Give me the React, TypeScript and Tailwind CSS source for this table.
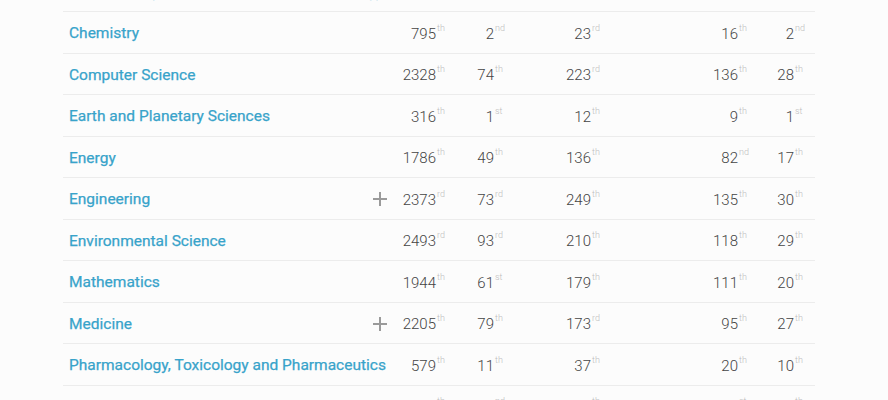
import React from "react";

type Rank = [string, string];
type Row = { name: string; plus?: boolean; r: Rank[] };

const rows: Row[] = [
  { name: "Biochemistry, Genetics and Molecular Biology", r: [["1120", "th"], ["38", "th"], ["142", "nd"], ["64", "th"], ["12", "th"]] },
  { name: "Chemistry", r: [["795", "th"], ["2", "nd"], ["23", "rd"], ["16", "th"], ["2", "nd"]] },
  { name: "Computer Science", r: [["2328", "th"], ["74", "th"], ["223", "rd"], ["136", "th"], ["28", "th"]] },
  { name: "Earth and Planetary Sciences", r: [["316", "th"], ["1", "st"], ["12", "th"], ["9", "th"], ["1", "st"]] },
  { name: "Energy", r: [["1786", "th"], ["49", "th"], ["136", "th"], ["82", "nd"], ["17", "th"]] },
  { name: "Engineering", plus: true, r: [["2373", "rd"], ["73", "rd"], ["249", "th"], ["135", "th"], ["30", "th"]] },
  { name: "Environmental Science", r: [["2493", "rd"], ["93", "rd"], ["210", "th"], ["118", "th"], ["29", "th"]] },
  { name: "Mathematics", r: [["1944", "th"], ["61", "st"], ["179", "th"], ["111", "th"], ["20", "th"]] },
  { name: "Medicine", plus: true, r: [["2205", "th"], ["79", "th"], ["173", "rd"], ["95", "th"], ["27", "th"]] },
  { name: "Pharmacology, Toxicology and Pharmaceutics", r: [["579", "th"], ["11", "th"], ["37", "th"], ["20", "th"], ["10", "th"]] },
  { name: "Physics and Astronomy", r: [["1254", "th"], ["42", "nd"], ["156", "th"], ["91", "st"], ["19", "th"]] },
];

const numWidths = ["w-[40px]", "w-[44px]", "w-[83px]", "w-[133px]", "w-[42px]"];

function Plus() {
  return (
    <svg width="16" height="16" viewBox="0 0 16 16" className="shrink-0 mt-[2px]">
      <path d="M8 1v14M1 8h14" stroke="#9a9a9a" strokeWidth="2" />
    </svg>
  );
}

export default function App() {
  return (
    <div className="w-[888px] h-[400px] overflow-hidden bg-[#fcfcfc]">
      <div className="ml-[63px] w-[752px] -mt-[29.5px]">
        {rows.map((row, i) => (
          <div
            key={i}
            className="flex items-center h-[41.5px] border-b border-[#ececec]"
          >
            <div className="w-[333px] shrink-0 flex items-center justify-between pl-[6px] pr-[8px]">
              <span
                className="text-[15.5px] text-[#38a3ca] whitespace-nowrap leading-none mt-[3px] [-webkit-text-stroke:0.25px_#38a3ca]"
                style={{ fontFamily: 'Roboto, sans-serif' }}
              >
                {row.name}
              </span>
              {row.plus && <Plus />}
            </div>
            {row.r.map(([n, s], j) => (
              <div key={j} className="flex shrink-0 mt-[4px]" style={{ fontFamily: 'Roboto, sans-serif' }}>
                <span className={`${numWidths[j]} text-right text-[15px] font-light text-[#444] leading-none`}>{n}</span>
                <span className="w-[14px] text-[9px] font-light text-[#bdbdbd] leading-none -mt-[3px] pl-[1px]">{s}</span>
              </div>
            ))}
          </div>
        ))}
      </div>
    </div>
  );
}
